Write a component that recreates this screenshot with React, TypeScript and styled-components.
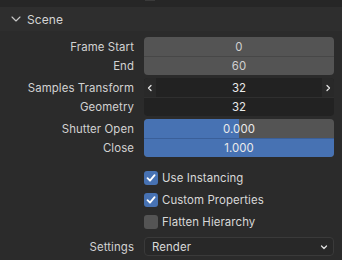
import React from "react";
import styled, { createGlobalStyle } from "styled-components";

const Global = createGlobalStyle`
  html, body {
    margin: 0;
    padding: 0;
    background: #2b2b2b;
  }
  * {
    box-sizing: border-box;
  }
`;

const Panel = styled.div`
  width: 342px;
  height: 260px;
  overflow: hidden;
  background: #2b2b2b;
  font-family: Inter, "Noto Sans", sans-serif;
  font-size: 11.4px;
  letter-spacing: 0.1px;
  color: #d8d8d8;
  display: flex;
  flex-direction: column;
`;

const TopStrip = styled.div`
  height: 7px;
  background: #262626;
  display: flex;
  justify-content: flex-start;
  padding-left: 145px;
`;

const TopNub = styled.div`
  width: 10px;
  height: 1px;
  background: #3a3a3a;
`;

const Header = styled.div`
  height: 24px;
  background: #2e2e2e;
  display: flex;
  align-items: center;
  gap: 6px;
  padding-left: 11px;
  color: #d4d4d4;
  font-size: 12px;
`;

const Body = styled.div`
  display: flex;
  flex-direction: column;
  padding: 6px 8px 0 0;
`;

const Group = styled.div<{ $gap?: number; $top?: number }>`
  display: flex;
  flex-direction: column;
  margin-top: ${(p) => p.$top ?? 0}px;
  margin-bottom: ${(p) => p.$gap ?? 3}px;
`;

const Row = styled.div`
  display: grid;
  grid-template-columns: 134px 1fr;
  column-gap: 10px;
  align-items: center;
  height: 19px;
`;

const Label = styled.div`
  text-align: right;
  white-space: nowrap;
  color: #d2d2d2;
`;

type Tone = "grey" | "dark" | "blue";

const toneBg: Record<Tone, string> = {
  grey: "#545454",
  dark: "#222222",
  blue: "#545454",
};

const toneLine: Record<Tone, string> = {
  grey: "#474747",
  dark: "#2f2f2f",
  blue: "#3a5f99",
};

const Field = styled.div<{ $tone: Tone; $first?: boolean; $last?: boolean }>`
  position: relative;
  height: 100%;
  background: ${(p) => toneBg[p.$tone]};
  border-radius: ${(p) => (p.$first ? "4px 4px" : "0 0")}
    ${(p) => (p.$last ? "4px 4px" : "0 0")};
  border-top: ${(p) => (p.$first ? "none" : `1px solid ${toneLine[p.$tone]}`)};
  display: flex;
  align-items: center;
  justify-content: center;
  overflow: hidden;
  color: ${(p) => (p.$tone === "grey" ? "#d0d0d0" : "#eaeaea")};
`;

const Fill = styled.div`
  position: absolute;
  left: 0;
  top: 0;
  bottom: 0;
  background: #4772b3;
`;

const FieldText = styled.span`
  position: relative;
`;

const ArrowBox = styled.div<{ $side: "left" | "right" }>`
  position: absolute;
  top: 0;
  bottom: 0;
  ${(p) => p.$side}: 0;
  width: 12px;
  background: #292929;
  display: flex;
  align-items: center;
  justify-content: center;
`;

const CheckRow = styled.div`
  display: grid;
  grid-template-columns: 134px 1fr;
  column-gap: 10px;
  align-items: center;
  height: 22px;
`;

const CheckItem = styled.div`
  display: flex;
  align-items: center;
  gap: 4px;
  color: #d8d8d8;
`;

const Box = styled.div<{ $on: boolean }>`
  width: 14px;
  height: 14px;
  border-radius: 3px;
  background: ${(p) => (p.$on ? "#4772b3" : "#545454")};
  display: flex;
  align-items: center;
  justify-content: center;
`;

const Dropdown = styled.div`
  height: 100%;
  background: #282828;
  border: 1px solid #3a3a3a;
  border-radius: 4px;
  display: flex;
  align-items: center;
  justify-content: space-between;
  padding: 0 5px 0 7px;
  color: #d8d8d8;
`;

const Chevron = ({ dir, size = 8, color = "#e0e0e0" }: { dir: "down" | "left" | "right"; size?: number; color?: string }) => {
  const d =
    dir === "down" ? "M1.5 3 L4 5.5 L6.5 3" : dir === "left" ? "M5 1.5 L2.5 4 L5 6.5" : "M3 1.5 L5.5 4 L3 6.5";
  return (
    <svg width={size} height={size} viewBox="0 0 8 8">
      <path d={d} fill="none" stroke={color} strokeWidth="1.3" strokeLinecap="round" strokeLinejoin="round" />
    </svg>
  );
};

const Check = () => (
  <svg width="12" height="12" viewBox="0 0 12 12">
    <path d="M2.5 6.2 L5 8.7 L9.6 3.2" fill="none" stroke="#ffffff" strokeWidth="1.8" strokeLinecap="round" strokeLinejoin="round" />
  </svg>
);

const App = () => {
  return (
    <>
      <Global />
      <Panel>
        <TopStrip>
          <TopNub />
        </TopStrip>
        <Header>
          <svg width="10" height="10" viewBox="0 0 10 10">
            <path d="M1 3 L5 7 L9 3" fill="none" stroke="#c8c8c8" strokeWidth="1.1" strokeLinecap="round" strokeLinejoin="round" />
          </svg>
          <span>Scene</span>
        </Header>
        <Body>
          <Group>
            <Row>
              <Label>Frame Start</Label>
              <Field $tone="grey" $first>
                <FieldText>0</FieldText>
              </Field>
            </Row>
            <Row>
              <Label>End</Label>
              <Field $tone="grey" $last>
                <FieldText>60</FieldText>
              </Field>
            </Row>
          </Group>
          <Group>
            <Row>
              <Label>Samples Transform</Label>
              <Field $tone="dark" $first>
                <ArrowBox $side="left">
                  <Chevron dir="left" />
                </ArrowBox>
                <FieldText>32</FieldText>
                <ArrowBox $side="right">
                  <Chevron dir="right" />
                </ArrowBox>
              </Field>
            </Row>
            <Row>
              <Label>Geometry</Label>
              <Field $tone="dark" $last>
                <FieldText>32</FieldText>
              </Field>
            </Row>
          </Group>
          <Group $gap={10}>
            <Row>
              <Label>Shutter Open</Label>
              <Field $tone="blue" $first>
                <Fill style={{ width: "50%" }} />
                <FieldText>0.000</FieldText>
              </Field>
            </Row>
            <Row>
              <Label>Close</Label>
              <Field $tone="blue" $last>
                <Fill style={{ width: "100%" }} />
                <FieldText>1.000</FieldText>
              </Field>
            </Row>
          </Group>
          <CheckRow>
            <span />
            <CheckItem>
              <Box $on>
                <Check />
              </Box>
              Use Instancing
            </CheckItem>
          </CheckRow>
          <CheckRow>
            <span />
            <CheckItem>
              <Box $on>
                <Check />
              </Box>
              Custom Properties
            </CheckItem>
          </CheckRow>
          <CheckRow>
            <span />
            <CheckItem>
              <Box $on={false} />
              Flatten Hierarchy
            </CheckItem>
          </CheckRow>
          <Group $gap={0} $top={4}>
            <Row>
              <Label>Settings</Label>
              <Dropdown>
                <span>Render</span>
                <Chevron dir="down" />
              </Dropdown>
            </Row>
          </Group>
        </Body>
      </Panel>
    </>
  );
};

export default App;
